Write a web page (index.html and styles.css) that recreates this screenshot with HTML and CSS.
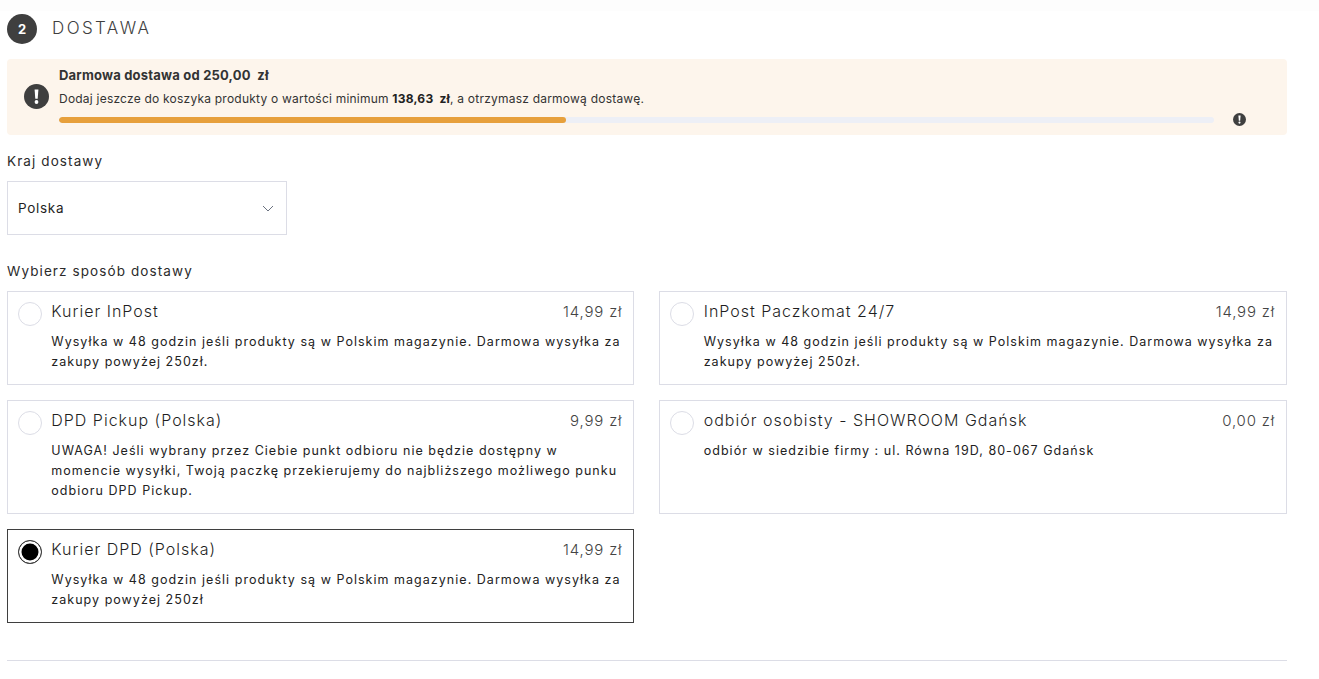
FILE: index.html
```html
<!DOCTYPE html>
<html lang="pl">
<head>
  <meta charset="utf-8">
  <title>Dostawa</title>
  <link rel="stylesheet" href="styles.css">
</head>
<body>
  <div class="top-strip"></div>
  <section class="checkout-step">
    <div class="step-header">
      <span class="step-number">2</span>
      <h2>DOSTAWA</h2>
    </div>

    <div class="free-shipping">
      <svg class="alert-icon" width="25" height="25" viewBox="0 0 25 25">
        <circle cx="12.5" cy="12.5" r="12.5" fill="#3f3f3f"/>
        <path d="M10.6 5.5h3.8l-.7 9.3h-2.4z" fill="#fff"/>
        <circle cx="12.5" cy="18" r="1.9" fill="#fff"/>
      </svg>
      <div class="free-shipping-body">
        <p class="free-title">Darmowa dostawa od 250,00 &nbsp;zł</p>
        <p class="free-text">Dodaj jeszcze do koszyka produkty o wartości minimum <b>138,63 &nbsp;zł</b>, a otrzymasz darmową dostawę.</p>
        <div class="progress-row">
          <div class="progress"><div class="progress-fill" style="width: 43.9%"></div></div>
          <svg class="alert-icon" width="13" height="13" viewBox="0 0 25 25">
            <circle cx="12.5" cy="12.5" r="12.5" fill="#3f3f3f"/>
            <path d="M10.4 5h4.2l-.8 10h-2.6z" fill="#fff"/>
            <circle cx="12.5" cy="18.5" r="2.1" fill="#fff"/>
          </svg>
        </div>
      </div>
    </div>

    <label class="field-label">Kraj dostawy</label>
    <div class="country-select">
      <span>Polska</span>
      <svg width="12" height="7" viewBox="0 0 12 7"><path d="M1 1l5 5 5-5" fill="none" stroke="#6b7280" stroke-width="1"/></svg>
    </div>

    <label class="field-label method-label">Wybierz sposób dostawy</label>
    <div class="methods">
      <div class="method">
        <span class="radio"></span>
        <div class="method-body">
          <div class="method-head"><span class="method-name">Kurier InPost</span><span class="method-price">14,99 zł</span></div>
          <p>Wysyłka w 48 godzin jeśli produkty są w Polskim magazynie. Darmowa wysyłka za zakupy powyżej 250zł.</p>
        </div>
      </div>
      <div class="method">
        <span class="radio"></span>
        <div class="method-body">
          <div class="method-head"><span class="method-name">InPost Paczkomat 24/7</span><span class="method-price">14,99 zł</span></div>
          <p>Wysyłka w 48 godzin jeśli produkty są w Polskim magazynie. Darmowa wysyłka za zakupy powyżej 250zł.</p>
        </div>
      </div>
      <div class="method">
        <span class="radio"></span>
        <div class="method-body">
          <div class="method-head"><span class="method-name">DPD Pickup (Polska)</span><span class="method-price">9,99 zł</span></div>
          <p>UWAGA! Jeśli wybrany przez Ciebie punkt odbioru nie będzie dostępny w momencie wysyłki, Twoją paczkę przekierujemy do najbliższego możliwego punku odbioru DPD Pickup.</p>
        </div>
      </div>
      <div class="method">
        <span class="radio"></span>
        <div class="method-body">
          <div class="method-head"><span class="method-name">odbiór osobisty - SHOWROOM Gdańsk</span><span class="method-price">0,00 zł</span></div>
          <p>odbiór w siedzibie firmy : ul. Równa 19D, 80-067 Gdańsk</p>
        </div>
      </div>
      <div class="method selected">
        <span class="radio"></span>
        <div class="method-body">
          <div class="method-head"><span class="method-name">Kurier DPD (Polska)</span><span class="method-price">14,99 zł</span></div>
          <p>Wysyłka w 48 godzin jeśli produkty są w Polskim magazynie. Darmowa wysyłka za zakupy powyżej 250zł</p>
        </div>
      </div>
    </div>
    <hr class="divider">
  </section>
</body>
</html>
```

FILE: styles.css
```css
body {
  margin: 0;
  background: #fff;
  color: #1f1f1f;
  font-family: Inter, "Liberation Sans", sans-serif;
}
p {
  margin: 0;
}
.top-strip {
  height: 11px;
  background: #fdfdfd;
}
.checkout-step {
  width: 1280px;
  margin-left: 7px;
}
.step-header {
  display: flex;
  align-items: center;
  height: 30px;
  margin-top: 3px;
}
.step-number {
  display: flex;
  align-items: center;
  justify-content: center;
  width: 30px;
  height: 30px;
  border-radius: 50%;
  background: #3f3f3f;
  color: #fff;
  font-size: 13px;
  font-weight: 700;
}
.step-header h2 {
  margin: 0 0 2px 15px;
  font-size: 17px;
  font-weight: 300;
  line-height: 26px;
  letter-spacing: 2.4px;
  color: #3f3f3f;
}

.free-shipping {
  height: 76px;
  display: flex;
  align-items: flex-start;
  margin-top: 15px;
  padding: 7px 41px 0 17px;
  background: #fdf5ec;
  border-radius: 4px;
  box-sizing: border-box;
}
.free-shipping > .alert-icon {
  flex: none;
  margin-top: 18px;
}
.free-shipping-body {
  flex: 1;
  margin-left: 10px;
}
.free-title {
  font-size: 13px;
  font-weight: 700;
  line-height: 18px;
  letter-spacing: .2px;
  color: #333;
}
.free-text {
  margin-top: 6px;
  font-size: 12px;
  line-height: 18px;
  letter-spacing: .22px;
  color: #333;
}
.free-text b {
  color: #222;
}
.progress-row {
  display: flex;
  align-items: center;
  gap: 19px;
  margin-top: 5px;
}
.progress {
  flex: 1;
  height: 6px;
  border-radius: 3px;
  background: #edeff6;
  overflow: hidden;
}
.progress-fill {
  height: 100%;
  border-radius: 3px;
  background: #e7a03c;
}

.field-label {
  display: block;
  margin-top: 16px;
  font-size: 13.5px;
  line-height: 20px;
  letter-spacing: 1.1px;
  color: #2b2b2b;
}
.method-label {
  margin-top: 26px;
}
.country-select {
  display: flex;
  align-items: center;
  justify-content: space-between;
  width: 280px;
  height: 54px;
  margin-top: 10px;
  padding: 0 12px 0 10px;
  border: 1px solid #dcdde6;
  box-sizing: border-box;
  font-size: 13.5px;
  letter-spacing: .7px;
}

.methods {
  display: grid;
  grid-template-columns: 627.4px 1fr;
  column-gap: 25px;
  row-gap: 15px;
  margin-top: 10px;
}
.method {
  display: flex;
  padding: 8px 11px 0 10px;
  border: 1px solid #dcdde6;
  box-sizing: border-box;
  min-height: 94px;
}
.method.selected {
  border-color: #3f3f3f;
}
.radio {
  flex: none;
  width: 24px;
  height: 24px;
  margin-top: 2px;
  border: 1px solid #dcdde6;
  border-radius: 50%;
  box-sizing: border-box;
}
.selected .radio {
  border-color: #3f3f3f;
  background: #000;
  box-shadow: inset 0 0 0 2.5px #fff;
}
.method-body {
  flex: 1;
  margin-left: 9.3px;
}
.method-head {
  display: flex;
  justify-content: space-between;
  align-items: center;
  height: 22px;
}
.method-name {
  font-size: 16px;
  font-weight: 300;
  letter-spacing: 1px;
  color: #1f1f1f;
}
.method-price {
  font-size: 15px;
  font-weight: 300;
  letter-spacing: .8px;
  color: #444;
}
.method-body p {
  margin-top: 10px;
  margin-bottom: 12px;
  font-size: 12.5px;
  line-height: 20px;
  letter-spacing: 1.03px;
  color: #222;
}
.divider {
  height: 1px;
  margin: 37px 0 0;
  border: 0;
  background: #dcdde6;
}
```
